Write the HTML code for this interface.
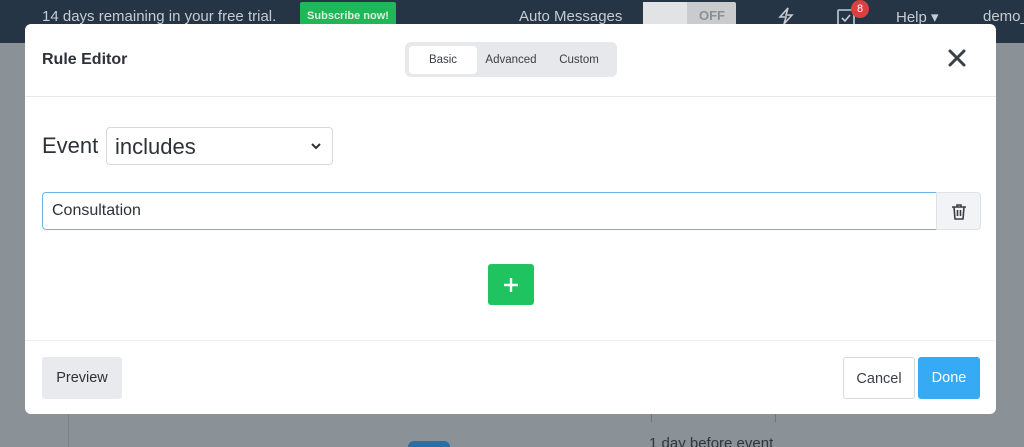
<!DOCTYPE html>
<html style="width:1024px;height:447px;overflow:hidden"><head><meta charset="utf-8"><style>
*{box-sizing:border-box;margin:0;padding:0}
body{width:1024px;height:447px;overflow:hidden;background:#8a9197;font-family:"Liberation Sans",sans-serif;position:relative}
.top{position:absolute;left:0;top:0;width:1024px;height:43px;background:#253545;color:#c6ccd2;font-size:15px}
.top span{position:absolute;top:8px}
.sub{position:absolute;left:300px;top:2px;width:96px;height:28px;background:#1fb757;color:#d8f0e0;font-size:11px;font-weight:bold;text-align:center;line-height:28px;border-radius:2px}
.tog{position:absolute;left:643px;top:2px;width:93px;height:26px;background:#c9cbcd;border-radius:2px}
.tog i{position:absolute;left:0;top:0;width:44px;height:26px;background:#e2e3e5}
.tog b{position:absolute;left:56px;top:6px;font-size:13px;color:#8a8f94}
.badge{position:absolute;left:851px;top:0;width:18px;height:18px;border-radius:50%;background:#d9403f;color:#fff;font-size:11px;text-align:center;line-height:18px}
.modal{position:absolute;left:25px;top:24px;width:971px;height:390px;background:#fff;border-radius:6px}
.hdr{height:73px;border-bottom:1px solid #e6e8ea;position:relative}
.title{position:absolute;left:17px;top:27px;font-size:16px;font-weight:bold;color:#2d3238}
.tabs{position:absolute;left:380px;top:18px;width:212px;height:35px;background:#e6e8eb;border-radius:6px}
.tabs div{position:absolute;top:4px;height:28px;line-height:28px;font-size:11.5px;color:#3a3f45;text-align:center}
.tabs .on{left:4px;width:68px;background:#fff;border-radius:4px}
.x{position:absolute;left:922px;top:24px}
.ev{position:absolute;left:17px;top:109px;font-size:22px;color:#2d3238}
.sel{position:absolute;left:81px;top:103px;width:227px;height:38px;border:1px solid #d6d9dc;border-radius:4px;font-size:22px;color:#2d3238;padding:6px 0 0 8px}
.inp{position:absolute;left:17px;top:168px;width:895px;height:38px;border:1px solid #6bb6e6;border-radius:4px 0 0 4px;font-size:16px;color:#2d3238;padding:9px 0 0 9px}
.del{position:absolute;left:911px;top:168px;width:45px;height:38px;border:1px solid #dfe2e5;background:#f1f3f5;border-radius:0 4px 4px 0}
.plus{position:absolute;left:463px;top:240px;width:46px;height:41px;background:#1fc35f;border-radius:3px}
.foot{position:absolute;left:0;top:316px;width:971px;border-top:1px solid #eceeef}
.btn{position:absolute;top:333px;height:42px;line-height:42px;font-size:14.5px;text-align:center;border-radius:3px}
</style></head><body>
<div class="top">
<span style="left:42px">14 days remaining in your free trial.</span>
<div class="sub">Subscribe now!</div>
<span style="left:519px">Auto Messages</span>
<div class="tog"><i></i><b>OFF</b></div>
<svg style="position:absolute;left:776px;top:6px" width="20" height="20" viewBox="0 0 20 20" fill="none" stroke="#c6ccd2" stroke-width="1.6"><path d="M12 2 4 11h6l-2 7 8-9h-6z"/></svg>
<svg style="position:absolute;left:836px;top:8px" width="20" height="20" viewBox="0 0 20 20" fill="none" stroke="#c6ccd2" stroke-width="1.6"><rect x="2" y="2" width="16" height="16" rx="1"/><path d="M6 10l3 3 5-6"/></svg>
<div class="badge">8</div>
<span style="left:896px">Help ▾</span>
<span style="left:983px">demo_</span>
</div>
<div style="position:absolute;left:68px;top:414px;width:1px;height:33px;background:#7c8388"></div>
<div style="position:absolute;left:651px;top:414px;width:1px;height:8px;background:#6f767c"></div>
<div style="position:absolute;left:775px;top:414px;width:1px;height:8px;background:#6f767c"></div>
<div style="position:absolute;left:408px;top:441px;width:42px;height:6px;border-radius:10px 10px 0 0;background:#2a6ea3"></div>
<div style="position:absolute;left:649px;top:436px;font-size:15px;line-height:15px;height:11px;overflow:hidden;color:#30363c">1 day before event</div>
<div class="modal">
<div class="hdr">
<div class="title">Rule Editor</div>
<div class="tabs"><div class="on">Basic</div><div style="left:76px;width:60px">Advanced</div><div style="left:140px;width:68px">Custom</div></div>
<svg class="x" width="20" height="20" viewBox="0 0 20 20" stroke="#3a3f45" stroke-width="3" stroke-linecap="round"><path d="M3 3l14 14M17 3L3 17"/></svg>
</div>
<div class="ev">Event</div>
<div class="sel">includes<svg style="position:absolute;right:10px;top:14px" width="12" height="8" viewBox="0 0 12 8" fill="none" stroke="#2d3238" stroke-width="2"><path d="M2 2l4 4 4-4"/></svg></div>
<div class="inp">Consultation</div>
<div class="del"><svg style="position:absolute;left:12px;top:9px" width="20" height="20" viewBox="0 0 20 20" fill="none" stroke="#3a3f45" stroke-width="1.6"><path d="M3 5h14M8 5V3h4v2M5 5l1 12h8l1-12M8.5 8v6M11.5 8v6"/></svg></div>
<div class="plus"><svg style="position:absolute;left:15px;top:13px" width="16" height="16" viewBox="0 0 16 16" stroke="#fff" stroke-width="2.4"><path d="M8 1v14M1 8h14"/></svg></div>
<div class="foot"></div>
<div class="btn" style="left:17px;width:80px;background:#e8eaed;color:#2d3238">Preview</div>
<div class="btn" style="left:818px;width:72px;border:1px solid #d6d9dc;color:#3a3f45">Cancel</div>
<div class="btn" style="left:893px;width:62px;background:#36aaf5;color:#fff">Done</div>
</div>
</body></html>
